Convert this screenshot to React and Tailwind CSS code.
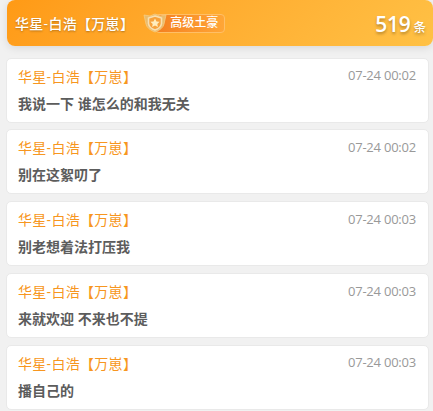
const messages = [
  { time: "07-24 00:02", text: "我说一下 谁怎么的和我无关" },
  { time: "07-24 00:02", text: "别在这絮叨了" },
  { time: "07-24 00:03", text: "别老想着法打压我" },
  { time: "07-24 00:03", text: "来就欢迎 不来也不提" },
  { time: "07-24 00:03", text: "播自己的" },
];

const userName = "华星-白浩【万崽】";

function RankBadge() {
  return (
    <span className="ml-[9px] flex h-5 items-center">
      <svg viewBox="0 0 24 20" className="z-10 h-5 w-6 shrink-0" fill="none">
        <path d="M1 2 L7 3 L12 1 L17 3 L23 2 L21 11 Q20 16 12 19 Q4 16 3 11 Z" fill="#e9bb6c" stroke="#f6cc80" strokeWidth="0.8" />
        <path d="M12 3 L18.5 5 V10.5 Q18 15 12 17 Q6 15 5.5 10.5 V5 Z" fill="#f7a23c" stroke="#f9dfb0" strokeWidth="1.6" />
        <path d="M12 5.5 L13.5 8.4 L16.6 8.8 L14.3 11 L14.9 14 L12 12.6 L9.1 14 L9.7 11 L7.4 8.8 L10.5 8.4 Z" fill="#ffedbd" />
      </svg>
      <span className="-ml-3 flex h-[19px] w-[70px] items-center rounded border border-[#ffbf66] bg-linear-to-r from-[#f47f20] to-[#ffa636] pl-[14px] text-xs leading-none font-medium whitespace-nowrap text-white">
        高级土豪
      </span>
    </span>
  );
}

function MessageCard({ time, text }) {
  return (
    <article className="h-[65px] shrink-0 rounded-[5px] border border-[#e9e9e9] bg-white pt-2 pr-3 pl-[11px]">
      <div className="flex h-5 items-center justify-between">
        <span className="text-sm tracking-[0.3px] text-[#f79620]">{userName}</span>
        <time className="mb-px text-[13px] tracking-[-0.22px] text-[#999]">{time}</time>
      </div>
      <p className="mt-[7px] text-sm leading-5 font-bold text-[#5c5c5c]">{text}</p>
    </article>
  );
}

export default function App() {
  return (
    <main className="h-[411px] w-[433px] overflow-hidden bg-[#f1f1f1] font-['Open_Sans','Noto_Sans_CJK_SC',sans-serif]">
      <header className="ml-[7px] flex h-[46px] items-center justify-between rounded-lg bg-linear-135 from-[#ff9a15] to-[#ffc145] pr-[7px] pl-2 text-white shadow-[0_2px_8px_rgba(0,0,0,0.1)]">
        <div className="flex items-center">
          <span className="pt-0.5 text-sm font-medium tracking-[0.3px] [text-shadow:0_1px_2px_rgba(0,0,0,0.3)]">{userName}</span>
          <RankBadge />
        </div>
        <div className="flex items-baseline gap-[3px] pt-[3px] [text-shadow:0_2px_3px_rgba(0,0,0,0.3)]">
          <span className="text-[21px] font-semibold tracking-[-0.3px]">519</span>
          <span className="text-[12.5px] font-medium">条</span>
        </div>
      </header>
      <section className="mt-[11.7px] mr-1 ml-1.5 flex flex-col gap-[6.75px]">
        {messages.map((message) => (
          <MessageCard key={message.text} {...message} />
        ))}
      </section>
    </main>
  );
}
